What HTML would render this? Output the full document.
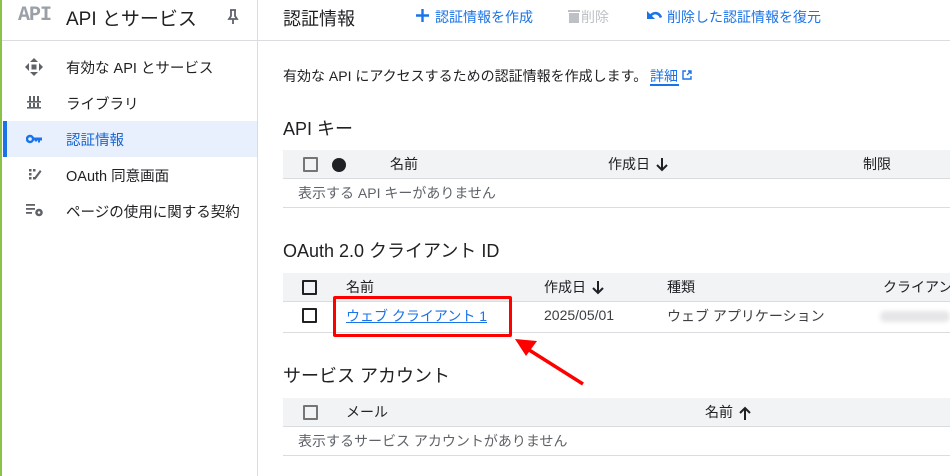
<!DOCTYPE html>
<html><head><meta charset="utf-8"><style>
*{margin:0;padding:0;box-sizing:border-box}
body{width:950px;height:476px;overflow:hidden;background:#fff;font-family:"Liberation Sans","Noto Sans CJK JP",sans-serif;color:#202124;position:relative;font-size:14px}
.a{position:absolute;white-space:nowrap}
.hdr{background:#f1f3f4}
.line{position:absolute;height:1px;background:#dadce0}
.cb{position:absolute;width:15px;height:15px;border:2px solid #202124;border-radius:1px}
.cb.g{border-color:#757575}
.blue{color:#1a73e8}
.ar{display:inline-block;vertical-align:middle;margin-left:6px}
</style></head><body>
<div class="a" style="left:0;top:0;width:2px;height:476px;background:#8bc34a"></div>
<div class="a" style="left:257px;top:0;width:1px;height:476px;background:#dadce0"></div>
<div class="line" style="left:2px;top:40px;width:948px"></div>
<!-- sidebar -->
<div class="a" style="left:18px;top:4px;font-family:'Liberation Mono',monospace;font-size:20px;font-weight:bold;color:#9aa0a6;letter-spacing:-1px">API</div>
<div class="a" style="left:66px;top:4px;font-size:19px">API とサービス</div>
<svg class="a" style="left:226px;top:9px" width="14" height="16" viewBox="0 0 14 16"><path d="M4 1h6M5 1v6L3 10h8L9 7V1M7 10v5" stroke="#5f6368" stroke-width="1.8" fill="none"/></svg>
<div class="a" style="left:3px;top:121px;width:254px;height:36px;background:#e8f0fe"></div>
<div class="a" style="left:3px;top:121px;width:4px;height:36px;background:#1a73e8"></div>
<svg class="a" style="left:25px;top:58px" width="18" height="18" viewBox="0 0 18 18" fill="#5f6368"><path d="M9 0l4 4H5zM9 18l4-4H5zM0 9l4-4v8zM18 9l-4-4v8z"/><rect x="6.5" y="6.5" width="5" height="5"/></svg>
<div class="a" style="left:66px;top:57px;font-size:14.5px">有効な API とサービス</div>
<svg class="a" style="left:27px;top:95px" width="14" height="14" viewBox="0 0 14 14" fill="#5f6368"><rect x="2" y="1" width="2" height="5"/><rect x="6" y="1" width="2" height="5"/><rect x="10" y="1" width="2" height="5"/><rect x="0" y="6" width="14" height="1.6"/><rect x="2" y="8" width="2" height="4"/><rect x="6" y="8" width="2" height="4"/><rect x="10" y="8" width="2" height="4"/><rect x="0" y="12" width="14" height="1.6"/></svg>
<div class="a" style="left:66px;top:93px;font-size:14.5px">ライブラリ</div>
<svg class="a" style="left:26px;top:134px" width="16" height="10" viewBox="0 0 16 10"><circle cx="4" cy="5" r="3" stroke="#1a73e8" stroke-width="2.4" fill="none"/><path d="M7 3.5h9v3h-2v2h-2v-2h-1v1h-2v-1H7z" fill="#1a73e8"/></svg>
<div class="a" style="left:66px;top:129px;font-size:14.5px;color:#1967d2">認証情報</div>
<svg class="a" style="left:28px;top:168px" width="14" height="14" viewBox="0 0 14 14" fill="#5f6368"><rect x="1" y="1" width="2.5" height="2.5"/><rect x="5" y="1" width="2.5" height="2.5"/><rect x="1" y="5" width="2.5" height="2.5"/><rect x="1" y="9" width="2.5" height="2.5"/><rect x="5" y="9" width="2.5" height="2.5"/><path d="M12 2l1.5 1.5-6 8-1.5-1.5z"/></svg>
<div class="a" style="left:66px;top:165px;font-size:14.5px">OAuth 同意画面</div>
<svg class="a" style="left:26px;top:203px" width="18" height="14" viewBox="0 0 18 14" fill="#5f6368"><rect x="0" y="1" width="9" height="1.8"/><rect x="0" y="5" width="9" height="1.8"/><rect x="0" y="9" width="6" height="1.8"/><circle cx="13" cy="9.5" r="3.8"/><circle cx="13" cy="9.5" r="1.3" fill="#fff"/></svg>
<div class="a" style="left:66px;top:201px;font-size:14.5px">ページの使用に関する契約</div>
<!-- top bar -->
<div class="a" style="left:283px;top:5px;font-size:18px">認証情報</div>
<svg class="a" style="left:416px;top:9px" width="13" height="13" viewBox="0 0 13 13"><path d="M6.5 0v13M0 6.5h13" stroke="#1a73e8" stroke-width="2.4"/></svg>
<div class="a blue" style="left:435px;top:7px;font-size:14px">認証情報を作成</div>
<svg class="a" style="left:568px;top:9px" width="12" height="14" viewBox="0 0 12 14" fill="#bdc1c6"><rect x="0" y="1" width="12" height="2"/><rect x="1" y="4" width="10" height="10"/></svg>
<div class="a" style="left:581px;top:7px;color:#bdc1c6">削除</div>
<svg class="a" style="left:646px;top:9px" width="16" height="12" viewBox="0 0 16 12"><path d="M4 7c4-4.5 9-3.5 11 1.5" stroke="#1a73e8" stroke-width="2.6" fill="none"/><path d="M1 2v8h8z" fill="#1a73e8"/></svg>
<div class="a blue" style="left:667px;top:7px">削除した認証情報を復元</div>
<!-- description -->
<div class="a" style="left:283px;top:66px;font-size:14px">有効な API にアクセスするための認証情報を作成します。</div>
<div class="a blue" style="left:650px;top:66px">詳細</div>
<div class="a" style="left:650px;top:84px;width:29px;height:2px;background:#1a73e8"></div>
<svg class="a" style="left:682px;top:70px" width="10" height="10" viewBox="0 0 10 10"><path d="M4 1H1v8h8V6M5 5l4-4M6 1h3v3" stroke="#1a73e8" stroke-width="1.4" fill="none"/></svg>
<!-- API keys -->
<div class="a" style="left:283px;top:115px;font-size:18px">API キー</div>
<div class="a hdr" style="left:283px;top:150px;width:667px;height:28px"></div>
<div class="line" style="left:283px;top:178px;width:667px"></div>
<div class="cb g" style="left:303px;top:157px"></div>
<div class="a" style="left:332px;top:158px;width:14px;height:14px;border-radius:50%;background:#202124"></div>
<div class="a" style="left:390px;top:154px">名前</div>
<div class="a" style="left:608px;top:154px">作成日<svg class="ar" width="12" height="14" viewBox="0 0 12 14"><path d="M6 0v12M1 7l5 5 5-5" stroke="#202124" stroke-width="2" fill="none"/></svg></div>
<div class="a" style="left:863px;top:154px">制限</div>
<div class="a" style="left:298px;top:183px;color:#5f6368">表示する API キーがありません</div>
<div class="line" style="left:283px;top:207px;width:667px"></div>
<!-- OAuth -->
<div class="a" style="left:283px;top:237px;font-size:18px">OAuth 2.0 クライアント ID</div>
<div class="a hdr" style="left:283px;top:273px;width:667px;height:28px"></div>
<div class="line" style="left:283px;top:301px;width:667px"></div>
<div class="cb" style="left:302px;top:280px"></div>
<div class="a" style="left:346px;top:277px">名前</div>
<div class="a" style="left:544px;top:277px">作成日<svg class="ar" width="12" height="14" viewBox="0 0 12 14"><path d="M6 0v12M1 7l5 5 5-5" stroke="#202124" stroke-width="2" fill="none"/></svg></div>
<div class="a" style="left:667px;top:277px">種類</div>
<div class="a" style="left:883px;top:277px">クライアン</div>
<div class="cb" style="left:302px;top:308px"></div>
<div class="a blue" style="left:346px;top:306px;text-decoration:underline">ウェブ クライアント 1</div>
<div class="a" style="left:544px;top:307px;color:#3c4043">2025/05/01</div>
<div class="a" style="left:667px;top:306px;color:#3c4043">ウェブ アプリケーション</div>
<div class="a" style="left:880px;top:311px;width:70px;height:11px;background:#e6e6e8;border-radius:5px;filter:blur(2px)"></div>
<div class="line" style="left:283px;top:332px;width:667px"></div>
<div class="a" style="left:333px;top:296px;width:179px;height:41px;border:3px solid #ff0000;border-radius:2px"></div>
<svg class="a" style="left:510px;top:336px" width="80" height="55" viewBox="0 0 80 55"><path d="M73 48L16 12" stroke="#f00" stroke-width="3.5"/><path d="M5 3l22 2-11 15z" fill="#f00"/></svg>
<!-- Service accounts -->
<div class="a" style="left:283px;top:362px;font-size:18px">サービス アカウント</div>
<div class="a hdr" style="left:283px;top:398px;width:667px;height:28px"></div>
<div class="line" style="left:283px;top:426px;width:667px"></div>
<div class="cb g" style="left:303px;top:405px"></div>
<div class="a" style="left:346px;top:402px">メール</div>
<div class="a" style="left:705px;top:402px">名前<svg class="ar" width="12" height="14" viewBox="0 0 12 14"><path d="M6 14V2M1 7l5-5 5 5" stroke="#202124" stroke-width="2" fill="none"/></svg></div>
<div class="a" style="left:298px;top:431px;color:#5f6368">表示するサービス アカウントがありません</div>
<div class="line" style="left:283px;top:455px;width:667px"></div>
</body></html>
